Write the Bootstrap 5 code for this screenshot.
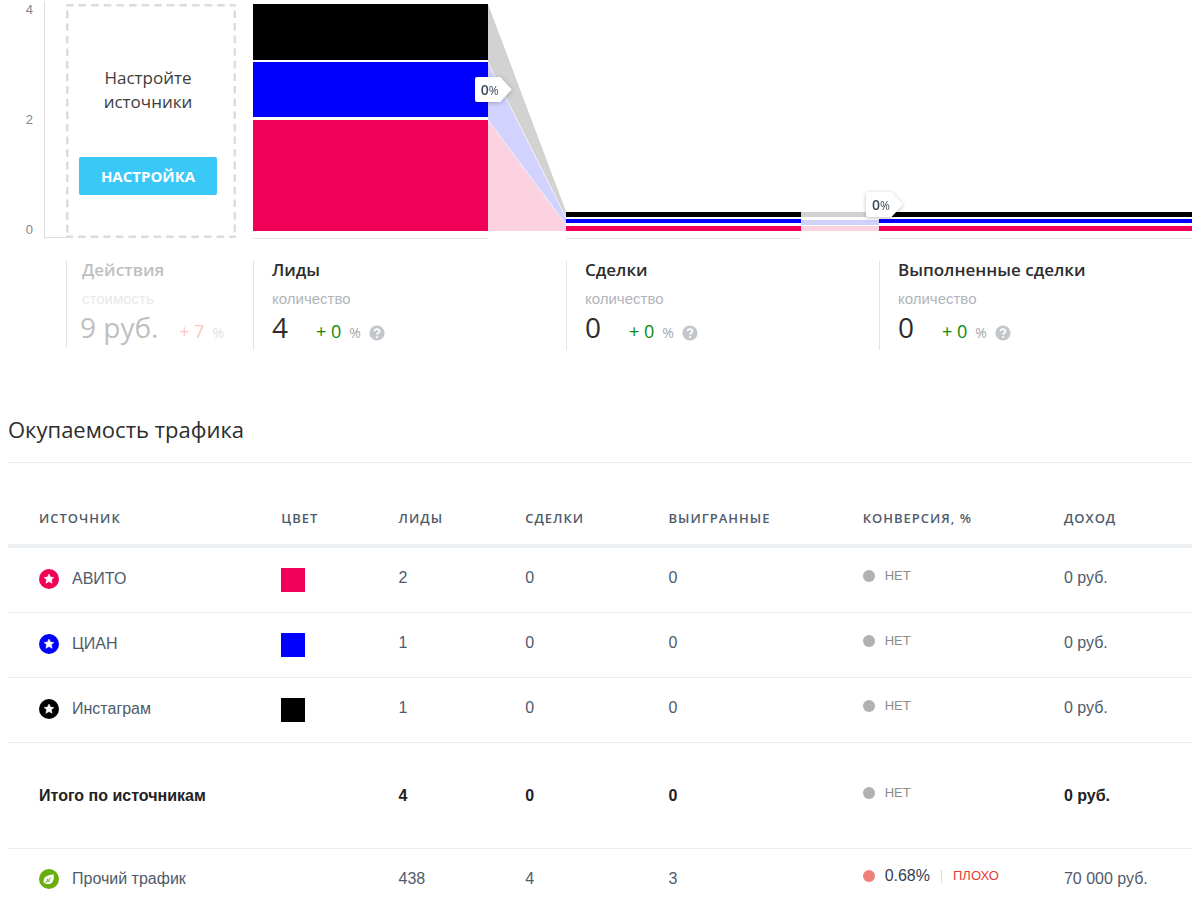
<!DOCTYPE html>
<html lang="ru">
<head>
<meta charset="utf-8">
<meta name="viewport" content="width=device-width, initial-scale=1">
<title>Окупаемость трафика</title>
<link href="https://cdn.jsdelivr.net/npm/bootstrap@5.3.0/dist/css/bootstrap.min.css" rel="stylesheet">
<style>
  body { font-family: "Liberation Sans", Arial, sans-serif; color: #2d2d2d; background: #fff; }
  .open { font-family: "Open Sans", sans-serif; }

  /* funnel */
  .funnel { display: grid; grid-template-columns: 58px 170px minmax(0, 1fr); grid-template-rows: 239px auto; }
  .axis { margin: 1px 0 1px; font-size: 13px; line-height: 16px; color: #7f8894; width: 37px; padding: 1px 11px 0 0; border-right: 1px solid #ddd; box-sizing: border-box; }
  .axis-foot { border-bottom: 1px solid #ddd; width: 21px; margin-bottom: 1px; }
  .setup { margin-top: 4px; height: 234px; }
  .setup-frame { position: absolute; inset: 0; width: 100%; height: 100%; }
  .setup-text { font-size: 17px; line-height: 24px; color: #3c3c3c; margin-top: 62px; }
  .btn-setup { --bs-btn-bg: #3ac8f6; --bs-btn-color: #fff; --bs-btn-hover-bg: #24b9e9; --bs-btn-hover-color: #fff; width: 138px; height: 38px; margin-top: 43px; border: 0; border-radius: 2px; font-size: 15px; line-height: 22px; font-weight: 700; padding: 0; }
  .setup-body { padding-right: 6px; }
  .stages { margin-left: 17px; }
  .stage { width: 33.3333%; }
  .plot { height: 231px; }
  .bars { width: 75%; }
  .stage:last-child .bars { width: 100%; }
  .flow { width: 25%; }
  .flow svg { display: block; width: 100%; height: 231px; }
  .foot { height: 8px; border-bottom: 1px solid #e6e6e6; }
  .big-a { height: 56px; } .big-b { height: 55px; } .big-c { height: 111px; }
  .small-a { height: 5px; } .small-b { height: 4px; } .small-c { height: 5px; }
  .mid { margin: 2px 0 3px; }
  .c-black { background: #000; } .c-blue { background: #00f; } .c-pink { background: #f10057; }
  .tag { position: absolute; width: 37px; height: 25px; left: -13px; filter: drop-shadow(0 1px 2px rgba(0,0,0,.25)); z-index: 2; }
  .tag-in { background: #fff; height: 25px; border-radius: 2px; clip-path: polygon(0 0, 69% 0, 100% 50%, 69% 100%, 0 100%); padding-left: 6px; font-size: 14px; line-height: 25px; font-weight: 600; color: #414d5e; white-space: nowrap; }
  .tag-in small { font-size: 12px; font-weight: 400; }
  .tag-1 { top: 77px; } .tag-2 { top: 192px; }

  .info { margin-top: 22px; border-left: 1px solid #e3e3e3; padding-left: 18px; height: 89px; }
  .info-title { font-size: 17px; line-height: 18px; font-weight: 600; margin: 0; }
  .info-label { font-size: 15px; line-height: 16px; color: #b1b5bb; margin-top: 12px; }
  .info-values { margin-top: 1px; line-height: 38px; }
  .num { font-size: 28px; }
  .delta { font-size: 18px; color: #0a870a; }
  .pct { font-size: 14px; color: #a3a9b0; }
  .hint { position: relative; top: 3px; }
  .info-off { height: 86px; padding-left: 15px; color: #bfbfbf; }
  .info-off .info-label { color: #e8e9eb; }
  .info-off .delta { color: #fcc7c7; }
  .info-off .pct { color: #dfe1e4; }
  .info-off .num { margin-left: -2px; }

  /* table */
  .sec-title { font-size: 22px; line-height: 32px; font-weight: 400; margin: 63px 0 0; padding-bottom: 17px; border-bottom: 1px solid #eceef0; }
  .roi { width: 100%; table-layout: fixed; color: #4f5b6b; font-size: 16px; line-height: 20px; margin-top: 29px; border-collapse: separate; border-spacing: 0; }
  .roi th:first-child, .roi td:first-child { padding-left: 31px; }
  .roi thead th { height: 56px; padding-bottom: 1px; font-size: 13px; font-weight: 600; letter-spacing: 1px; border-bottom: 4px solid #eef1f3; vertical-align: middle; }
  .roi tbody td, .roi tbody th { height: 65px; font-weight: 400; padding-bottom: 5px; vertical-align: middle; border-bottom: 1px solid #eceef1; }
  .roi tbody .name { padding-bottom: 4px; }
  .roi tbody .conv { padding-bottom: 9px; }
  .roi tbody .tint { padding-bottom: 1px; }
  .roi tbody .sum th, .roi tbody .sum td { height: 106px; padding-bottom: 0; font-weight: 700; color: #222; }
  .roi tbody .sum .conv { padding-bottom: 6px; }
  .roi tbody .last td, .roi tbody .last th { height: 57px; padding-top: 2px; padding-bottom: 0; border-bottom: 0; }
  .roi tbody .last .name { padding-top: 3px; }
  .roi tbody .last .conv { padding-bottom: 5px; }
  .src { gap: 13px; }
  .rating { gap: 10px; }
  .swatch { width: 24px; height: 24px; }
  .dot { width: 12px; height: 12px; border-radius: 50%; background: #b1b1b1; }
  .none { font-size: 13px; font-weight: 400; color: #8b8b8b; }
  .bad { font-size: 13px; color: #e53b35; }
  .rate { color: #364152; }
  .sep { width: 1px; height: 13px; background: #dcdcdc; margin: 0 1px; }
</style>
</head>
<body>
<main class="container-fluid px-2">
  <section class="funnel">
    <div class="d-flex">
      <div class="axis d-flex flex-column justify-content-between align-items-end"><span>4</span><span>2</span><span>0</span></div>
      <div class="axis-foot"></div>
    </div>
    <div class="setup position-relative text-center open">
      <svg class="setup-frame" aria-hidden="true"><rect x="0" y="0" width="100%" height="100%" fill="none" stroke="#dcdcdc" stroke-width="5" stroke-dasharray="7.6 5"/></svg>
      <div class="setup-body position-relative d-flex flex-column align-items-center">
        <div class="setup-text">Настройте<br>источники</div>
        <button type="button" class="btn btn-setup">НАСТРОЙКА</button>
      </div>
    </div>
    <div class="stages d-flex">
      <div class="stage">
        <div class="plot d-flex">
          <div class="bars d-flex flex-column justify-content-end">
            <div class="big-a c-black"></div>
            <div class="big-b mid c-blue"></div>
            <div class="big-c c-pink"></div>
          </div>
          <div class="flow position-relative">
            <svg viewBox="0 0 78 231" preserveAspectRatio="none" aria-hidden="true">
              <path d="M0 4L78 212V218L0 62Z" fill="#d2d2d2"/>
              <path d="M0 62L78 218V225L0 120Z" fill="#d2d2ff"/>
              <path d="M0 120L78 225V231H0Z" fill="#fcd2e1"/>
              <path d="M0 62L78 218M0 120L78 225" stroke="#ecebf3" fill="none"/>
            </svg>
            <div class="tag tag-1"><div class="tag-in open">0<small>%</small></div></div>
          </div>
        </div>
        <div class="foot bars"></div>
      </div>
      <div class="stage">
        <div class="plot d-flex">
          <div class="bars d-flex flex-column justify-content-end">
            <div class="small-a c-black"></div>
            <div class="small-b mid c-blue"></div>
            <div class="small-c c-pink"></div>
          </div>
          <div class="flow">
            <svg viewBox="0 0 78 231" preserveAspectRatio="none" aria-hidden="true">
              <path d="M0 212H78V217H0Z" fill="#d2d2d2"/>
              <path d="M0 220H78V225H0Z" fill="#d2d2ff"/>
              <path d="M0 226H78V231H0Z" fill="#fcd2e1"/>
            </svg>
          </div>
        </div>
        <div class="foot bars"></div>
      </div>
      <div class="stage position-relative">
        <div class="plot d-flex">
          <div class="bars d-flex flex-column justify-content-end">
            <div class="small-a c-black"></div>
            <div class="small-b mid c-blue"></div>
            <div class="small-c c-pink"></div>
          </div>
        </div>
        <div class="foot bars"></div>
        <div class="tag tag-2"><div class="tag-in open">0<small>%</small></div></div>
      </div>
    </div>

    <div></div>
    <div class="info info-off">
      <h2 class="info-title open">Действия</h2>
      <div class="info-label">стоимость</div>
      <div class="info-values open d-flex align-items-baseline"><span class="num">9 руб.</span><span class="delta ms-auto">+ 7</span><span class="pct ms-2 me-2 pe-1">%</span></div>
    </div>
    <div class="stages d-flex">
      <div class="stage"><div class="info">
        <h2 class="info-title open">Лиды</h2>
        <div class="info-label">количество</div>
        <div class="info-values open d-flex align-items-baseline"><span class="num me-4 pe-1">4</span><span class="delta me-2">+ 0</span><span class="pct me-2">%</span><svg class="hint" width="16" height="16" viewBox="0 0 16 16" role="img" aria-label="Подсказка"><circle cx="8" cy="8" r="7.6" fill="#c3c7cb"/><path d="M5.6 6.3C5.7 3.2 10.5 3.4 10.4 6.2C10.3 7.9 8.1 7.8 8.1 9.7" fill="none" stroke="#fff" stroke-width="1.8"/><circle cx="8.1" cy="12" r="1.1" fill="#fff"/></svg></div>
      </div></div>
      <div class="stage"><div class="info">
        <h2 class="info-title open">Сделки</h2>
        <div class="info-label">количество</div>
        <div class="info-values open d-flex align-items-baseline"><span class="num me-4 pe-1">0</span><span class="delta me-2">+ 0</span><span class="pct me-2">%</span><svg class="hint" width="16" height="16" viewBox="0 0 16 16" role="img" aria-label="Подсказка"><circle cx="8" cy="8" r="7.6" fill="#c3c7cb"/><path d="M5.6 6.3C5.7 3.2 10.5 3.4 10.4 6.2C10.3 7.9 8.1 7.8 8.1 9.7" fill="none" stroke="#fff" stroke-width="1.8"/><circle cx="8.1" cy="12" r="1.1" fill="#fff"/></svg></div>
      </div></div>
      <div class="stage"><div class="info">
        <h2 class="info-title open">Выполненные сделки</h2>
        <div class="info-label">количество</div>
        <div class="info-values open d-flex align-items-baseline"><span class="num me-4 pe-1">0</span><span class="delta me-2">+ 0</span><span class="pct me-2">%</span><svg class="hint" width="16" height="16" viewBox="0 0 16 16" role="img" aria-label="Подсказка"><circle cx="8" cy="8" r="7.6" fill="#c3c7cb"/><path d="M5.6 6.3C5.7 3.2 10.5 3.4 10.4 6.2C10.3 7.9 8.1 7.8 8.1 9.7" fill="none" stroke="#fff" stroke-width="1.8"/><circle cx="8.1" cy="12" r="1.1" fill="#fff"/></svg></div>
      </div></div>
    </div>
  </section>

  <h1 class="sec-title open">Окупаемость трафика</h1>
  <svg width="0" height="0" class="position-absolute" aria-hidden="true">
    <symbol id="star" viewBox="0 0 20 20"><circle cx="10" cy="10" r="10" fill="currentColor"/><path d="M10 5L11.5 8.1L14.9 8.5L12.4 10.8L13.1 14.3L10 12.6L6.9 14.3L7.6 10.8L5.1 8.5L8.5 8.1Z" fill="#fff" stroke="#fff" stroke-width=".5" stroke-linejoin="round"/></symbol>
    <symbol id="leaf" viewBox="0 0 20 20"><circle cx="10" cy="10" r="10" fill="currentColor"/><path d="M5 14.8C3.6 9 6.2 6 14.8 5.4C15.4 12.4 12.6 16.4 6.6 14.7Z" fill="#fff"/><path d="M4.8 15.4L12 8.6M8.3 9.6V12.1H11.2" fill="none" stroke="currentColor" stroke-width="1"/></symbol>
  </svg>
  <table class="roi">
    <colgroup><col style="width:23%"><col style="width:9.9%"><col style="width:10.7%"><col style="width:12.1%"><col style="width:16.4%"><col style="width:17%"><col></colgroup>
    <thead class="open"><tr><th scope="col">ИСТОЧНИК</th><th scope="col">ЦВЕТ</th><th scope="col">ЛИДЫ</th><th scope="col">СДЕЛКИ</th><th scope="col">ВЫИГРАННЫЕ</th><th scope="col">КОНВЕРСИЯ, %</th><th scope="col">ДОХОД</th></tr></thead>
    <tbody>
      <tr><th scope="row" class="name"><div class="src d-flex align-items-center"><svg width="20" height="20" style="color:#f10057" aria-hidden="true"><use href="#star"/></svg><span>АВИТО</span></div></th><td class="tint"><div class="swatch c-pink"></div></td><td>2</td><td>0</td><td>0</td><td class="conv"><div class="rating d-flex align-items-center"><span class="dot"></span><span class="none">НЕТ</span></div></td><td>0 руб.</td></tr>
      <tr><th scope="row" class="name"><div class="src d-flex align-items-center"><svg width="20" height="20" style="color:#00f" aria-hidden="true"><use href="#star"/></svg><span>ЦИАН</span></div></th><td class="tint"><div class="swatch c-blue"></div></td><td>1</td><td>0</td><td>0</td><td class="conv"><div class="rating d-flex align-items-center"><span class="dot"></span><span class="none">НЕТ</span></div></td><td>0 руб.</td></tr>
      <tr><th scope="row" class="name"><div class="src d-flex align-items-center"><svg width="20" height="20" style="color:#000" aria-hidden="true"><use href="#star"/></svg><span>Инстаграм</span></div></th><td class="tint"><div class="swatch c-black"></div></td><td>1</td><td>0</td><td>0</td><td class="conv"><div class="rating d-flex align-items-center"><span class="dot"></span><span class="none">НЕТ</span></div></td><td>0 руб.</td></tr>
      <tr class="sum"><th scope="row">Итого по источникам</th><td></td><td>4</td><td>0</td><td>0</td><td class="conv"><div class="rating d-flex align-items-center"><span class="dot"></span><span class="none">НЕТ</span></div></td><td>0 руб.</td></tr>
      <tr class="last"><th scope="row" class="name"><div class="src d-flex align-items-center"><svg width="20" height="20" style="color:#69ae0c" aria-hidden="true"><use href="#leaf"/></svg><span>Прочий трафик</span></div></th><td></td><td>438</td><td>4</td><td>3</td><td class="conv"><div class="rating d-flex align-items-center"><span class="dot" style="background:#ee807c"></span><span class="rate">0.68%</span><span class="sep"></span><span class="bad">ПЛОХО</span></div></td><td>70 000 руб.</td></tr>
    </tbody>
  </table>
</main>
<script src="https://cdn.jsdelivr.net/npm/bootstrap@5.3.0/dist/js/bootstrap.bundle.min.js"></script>
</body>
</html>
